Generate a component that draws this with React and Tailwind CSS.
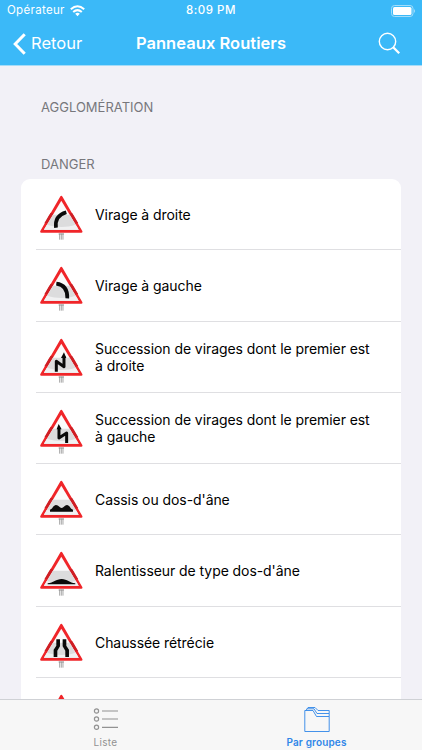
import React from 'react';

function Glyph({ kind }) {
  switch (kind) {
    case 'right':
      return <path d="M78 128 C75 104 84 89 109 82" stroke="#0a0a0a" strokeWidth="11" fill="none" />;
    case 'left':
      return <path d="M79 83 C103 86 113 100 112 127" stroke="#0a0a0a" strokeWidth="11" fill="none" />;
    case 'zigRight':
      return (
        <g>
          <path d="M79 131 V100 L102 116 V84" stroke="#0a0a0a" strokeWidth="9" fill="none" strokeLinejoin="round" />
          <path d="M93 90 L102 73 L109 90 Z" fill="#0a0a0a" />
        </g>
      );
    case 'zigLeft':
      return (
        <g>
          <path d="M110 132 V102 L87 117 V86" stroke="#0a0a0a" strokeWidth="9" fill="none" strokeLinejoin="round" />
          <path d="M80 91 L86 75 L95 91 Z" fill="#0a0a0a" />
        </g>
      );
    case 'bumps':
      return <path d="M60 125 V119 C68 117 70 105 78 105 C86 105 89 114 95 114 C101 114 104 105 111 105 C119 105 121 117 129 119 V125 Z" fill="#0a0a0a" />;
    case 'hump':
      return <path d="M53 130 V127 C70 126 78 114 95 114 C112 114 119 126 136 127 V130 Z" fill="#0a0a0a" />;
    default:
      return (
        <g fill="#0a0a0a">
          <path d="M79 79 H90 V100 L82 113 V132 H71 V110 L79 98 Z" />
          <path d="M98 79 H109 V98 L117 110 V132 H106 V113 L98 100 Z" />
        </g>
      );
  }
}

function Sign({ kind }) {
  return (
    <svg viewBox="30 30 130 140" className="mt-4 h-[46.7px] w-[43.3px] shrink-0">
      <path d="M89 146 V164 M94 146 V164 M99 146 V164" stroke="#8f8f8f" strokeWidth="2.4" />
      <path d="M86 147 H102" stroke="#8f8f8f" strokeWidth="3" />
      <path d="M94 32 Q96 32 98 36 L157 138 Q159 143 154 143 H34 Q29 143 31 138 L90 36 Q92 32 94 32 Z" fill="#f02529" />
      <path d="M57 91 L62 83 L72 86 L52 115 L43 115 Z M131 91 L126 83 L116 86 L136 115 L145 115 Z" fill="#cf1e24" />
      <path d="M94 47 L146 134 H42 Z" fill="#fbfbfb" />
      <path d="M69 89 H119 L146 134 H42 Z" fill="#dcdcdd" />
      <path d="M42 134 L51 119 C80 128 110 128 137 119 L146 134 Z" fill="#f1f1f2" />
      {kind && <Glyph kind={kind} />}
    </svg>
  );
}

const signs = [
  { kind: 'right', lines: ['Virage à droite'] },
  { kind: 'left', lines: ['Virage à gauche'] },
  { kind: 'zigRight', lines: ['Succession de virages dont le premier est', 'à droite'] },
  { kind: 'zigLeft', lines: ['Succession de virages dont le premier est', 'à gauche'] },
  { kind: 'bumps', lines: ["Cassis ou dos-d'âne"] },
  { kind: 'hump', lines: ["Ralentisseur de type dos-d'âne"] },
  { kind: 'narrow', lines: ['Chaussée rétrécie'] },
  { kind: '', lines: [] },
];

function Header() {
  return (
    <header className="h-[66px] shrink-0 border-b border-[#a5dcf8] bg-[#3bb9f8] text-white">
      <div className="grid h-[22px] grid-cols-[1fr_auto_1fr] items-center px-[7px] text-[11.5px]">
        <div className="flex items-center gap-[5px]">
          <span className="tracking-[0.32px]">Opérateur</span>
          <svg viewBox="0 0 15 12" className="h-3 w-[15px]" fill="none" stroke="white" strokeWidth="2">
            <path d="M0.800 4.300 Q7.500 -1.700 14.200 4.300 M3.200 7 Q7.500 3.200 11.800 7" />
            <path d="M5.200 8.700 Q7.500 7 9.800 8.700 L7.500 11.200 Z" fill="white" stroke="none" />
          </svg>
        </div>
        <span className="text-center font-medium tracking-[0.5px]">8:09 PM</span>
        <svg viewBox="0 0 25 12" className="h-3 w-[25px] justify-self-end">
          <rect x="1.500" y="0.500" width="21.500" height="11" rx="3" fill="none" stroke="#a2ddfb" />
          <rect x="3" y="2" width="18.500" height="8" rx="1.500" fill="white" />
          <path d="M24 4 Q26 6 24 8 Z" fill="#a2ddfb" />
        </svg>
      </div>
      <div className="grid h-[43px] grid-cols-[1fr_auto_1fr] items-center px-[13px]">
        <div className="flex items-center gap-[5px]">
          <svg viewBox="0 0 13 22" className="h-[22px] w-[13px]" fill="none" stroke="white" strokeWidth="3">
            <path d="M11.700 1.200 L2.200 11 L11.700 20.800" />
          </svg>
          <span className="text-[16.500px]">Retour</span>
        </div>
        <h1 className="text-[16.500px] font-semibold tracking-[0.04px]">Panneaux Routiers</h1>
        <svg viewBox="0 0 23 23" className="mr-2 h-[23px] w-[23px] justify-self-end" fill="none" stroke="white">
          <circle cx="9.500" cy="9.500" r="8.200" strokeWidth="1.400" />
          <path d="M15.200 15.300 L21.200 21.300" strokeWidth="2.300" />
        </svg>
      </div>
    </header>
  );
}

function Row({ kind, lines }) {
  return (
    <li className="flex h-[71.300px] shrink-0 pl-[19px]">
      <Sign kind={kind} />
      <div className="ml-[11.700px] flex flex-1 flex-col justify-center pb-[0.500px]">
        {lines.map((line) => (
          <p key={line} className="whitespace-nowrap text-[14px] leading-[17px] tracking-[-0.07px] text-black">{line}</p>
        ))}
      </div>
    </li>
  );
}

function TabBar() {
  return (
    <nav className="grid h-[51px] shrink-0 grid-cols-2 border-t border-[#cfd1d5] bg-[#f7f7f7] text-[10px]">
      <div className="flex flex-col items-center pt-[7px] text-[#929292]">
        <svg viewBox="0 0 26 26" className="h-[26px] w-[26px]" fill="none" stroke="currentColor" strokeWidth="1.200">
          <circle cx="3.500" cy="4" r="2.100" />
          <circle cx="3.500" cy="12" r="2.100" />
          <circle cx="3.500" cy="20.300" r="2.100" />
          <path d="M9 4 H25 M9 12 H25 M9 20.300 H25" />
        </svg>
        <span className="mt-[2px] leading-[14px] tracking-[0.3px]">Liste</span>
      </div>
      <div className="flex flex-col items-center pt-[7px] text-[#2f86e8]">
        <svg viewBox="0 0 26 26" className="h-[26px] w-[26px]" fill="none" stroke="currentColor" strokeWidth="0.900">
          <path d="M0.800 24.500 V3.500 H9 L12.500 9.500 H25.200 V24.500 Z" />
          <path d="M2 3.500 L3 1.800 H10 L13 6.500 H25.200 V9.500 M3 1.800 L4 0.500 H11 L14 3.500 H25.200 V6.500" />
        </svg>
        <span className="mt-[2px] font-semibold leading-[14px] tracking-[0.15px]">Par groupes</span>
      </div>
    </nav>
  );
}

export default function App() {
  return (
    <div className="flex h-[750px] w-[422px] flex-col overflow-hidden bg-[#f2f1f7] font-[Inter,sans-serif]">
      <Header />
      <main className="flex min-h-0 flex-1 flex-col overflow-hidden px-[21px]">
        <h2 className="mt-[33px] pl-5 text-[13px] leading-4 text-[#77777c]">AGGLOMÉRATION</h2>
        <h2 className="mt-[41px] pl-5 text-[13px] leading-4 text-[#77777c]">DANGER</h2>
        <ul className="mt-[7px] shrink-0 rounded-[9px] bg-white">
          {signs.map((sign, i) => (
            <React.Fragment key={i}>
              {i > 0 && <li className="-mt-px ml-[15px] h-px bg-[#dfdfe2]" />}
              <Row {...sign} />
            </React.Fragment>
          ))}
        </ul>
      </main>
      <TabBar />
    </div>
  );
}
